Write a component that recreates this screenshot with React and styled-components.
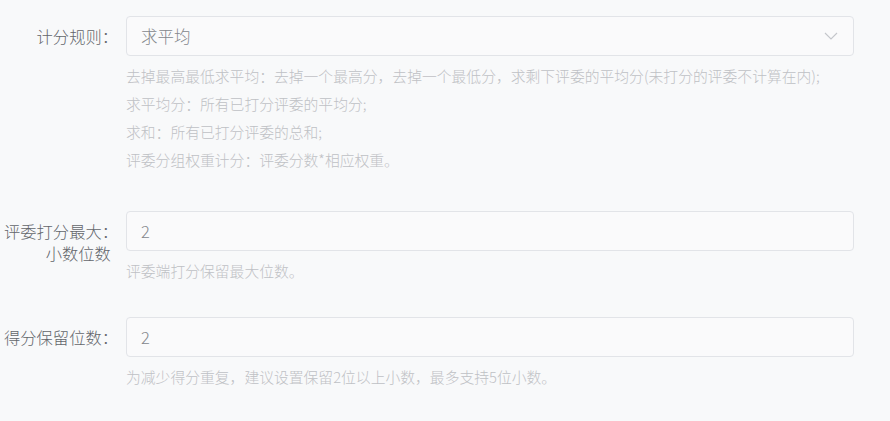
import React from "react";
import styled, { createGlobalStyle } from "styled-components";

const Global = createGlobalStyle`
  html, body { margin: 0; padding: 0; background: #f8f9fa; }
  body { font-family: "Noto Sans CJK SC", "Noto Sans", sans-serif; }
`;

const Form = styled.div`
  width: 890px;
  height: 421px;
  box-sizing: border-box;
  padding: 16px 36px 0 0;
  background: #f8f9fa;
  display: flex;
  flex-direction: column;
`;

const Item = styled.div`
  display: grid;
  grid-template-columns: 118px 728px;
  column-gap: 8px;
  margin-bottom: ${(p) => p.$after}px;
`;

const Label = styled.div`
  text-align: right;
  font-size: 16.3px;
  font-weight: 300;
  line-height: 22px;
  color: #63666b;
  padding-top: 9px;
  white-space: nowrap;
`;

const Control = styled.div`
  display: flex;
  flex-direction: column;
`;

const Box = styled.div`
  height: 40px;
  box-sizing: border-box;
  border: 1px solid #e2e4e8;
  border-radius: 4px;
  background: #fafafb;
  display: flex;
  align-items: center;
  padding: 0 15px 0 14px;
  font-size: 16.5px;
  font-weight: 300;
  color: #84878c;
`;

const Value = styled.span`
  flex: 1;
`;

const Chevron = styled.svg`
  width: 14px;
  height: 8px;
`;

const Help = styled.div`
  margin-top: 6px;
  font-size: 14.8px;
  font-weight: 300;
  line-height: 28px;
  color: #bfc1c5;
  white-space: nowrap;
`;

export default function App() {
  return (
    <>
      <Global />
      <Form>
        <Item $after={37}>
          <Label>计分规则：</Label>
          <Control>
            <Box>
              <Value>求平均</Value>
              <Chevron viewBox="0 0 14 8" fill="none">
                <path d="M1 1 L7 7 L13 1" stroke="#c4c6cb" strokeWidth="1.1" />
              </Chevron>
            </Box>
            <Help>
              <div>去掉最高最低求平均：去掉一个最高分，去掉一个最低分，求剩下评委的平均分(未打分的评委不计算在内);</div>
              <div>求平均分：所有已打分评委的平均分;</div>
              <div>求和：所有已打分评委的总和;</div>
              <div>评委分组权重计分：评委分数*相应权重。</div>
            </Help>
          </Control>
        </Item>
        <Item $after={32}>
          <Label>
            评委打分最大：
            <br />
            小数位数&nbsp;&nbsp;
          </Label>
          <Control>
            <Box>
              <Value>2</Value>
            </Box>
            <Help>评委端打分保留最大位数。</Help>
          </Control>
        </Item>
        <Item $after={0}>
          <Label>得分保留位数：</Label>
          <Control>
            <Box>
              <Value>2</Value>
            </Box>
            <Help>为减少得分重复，建议设置保留2位以上小数，最多支持5位小数。</Help>
          </Control>
        </Item>
      </Form>
    </>
  );
}
